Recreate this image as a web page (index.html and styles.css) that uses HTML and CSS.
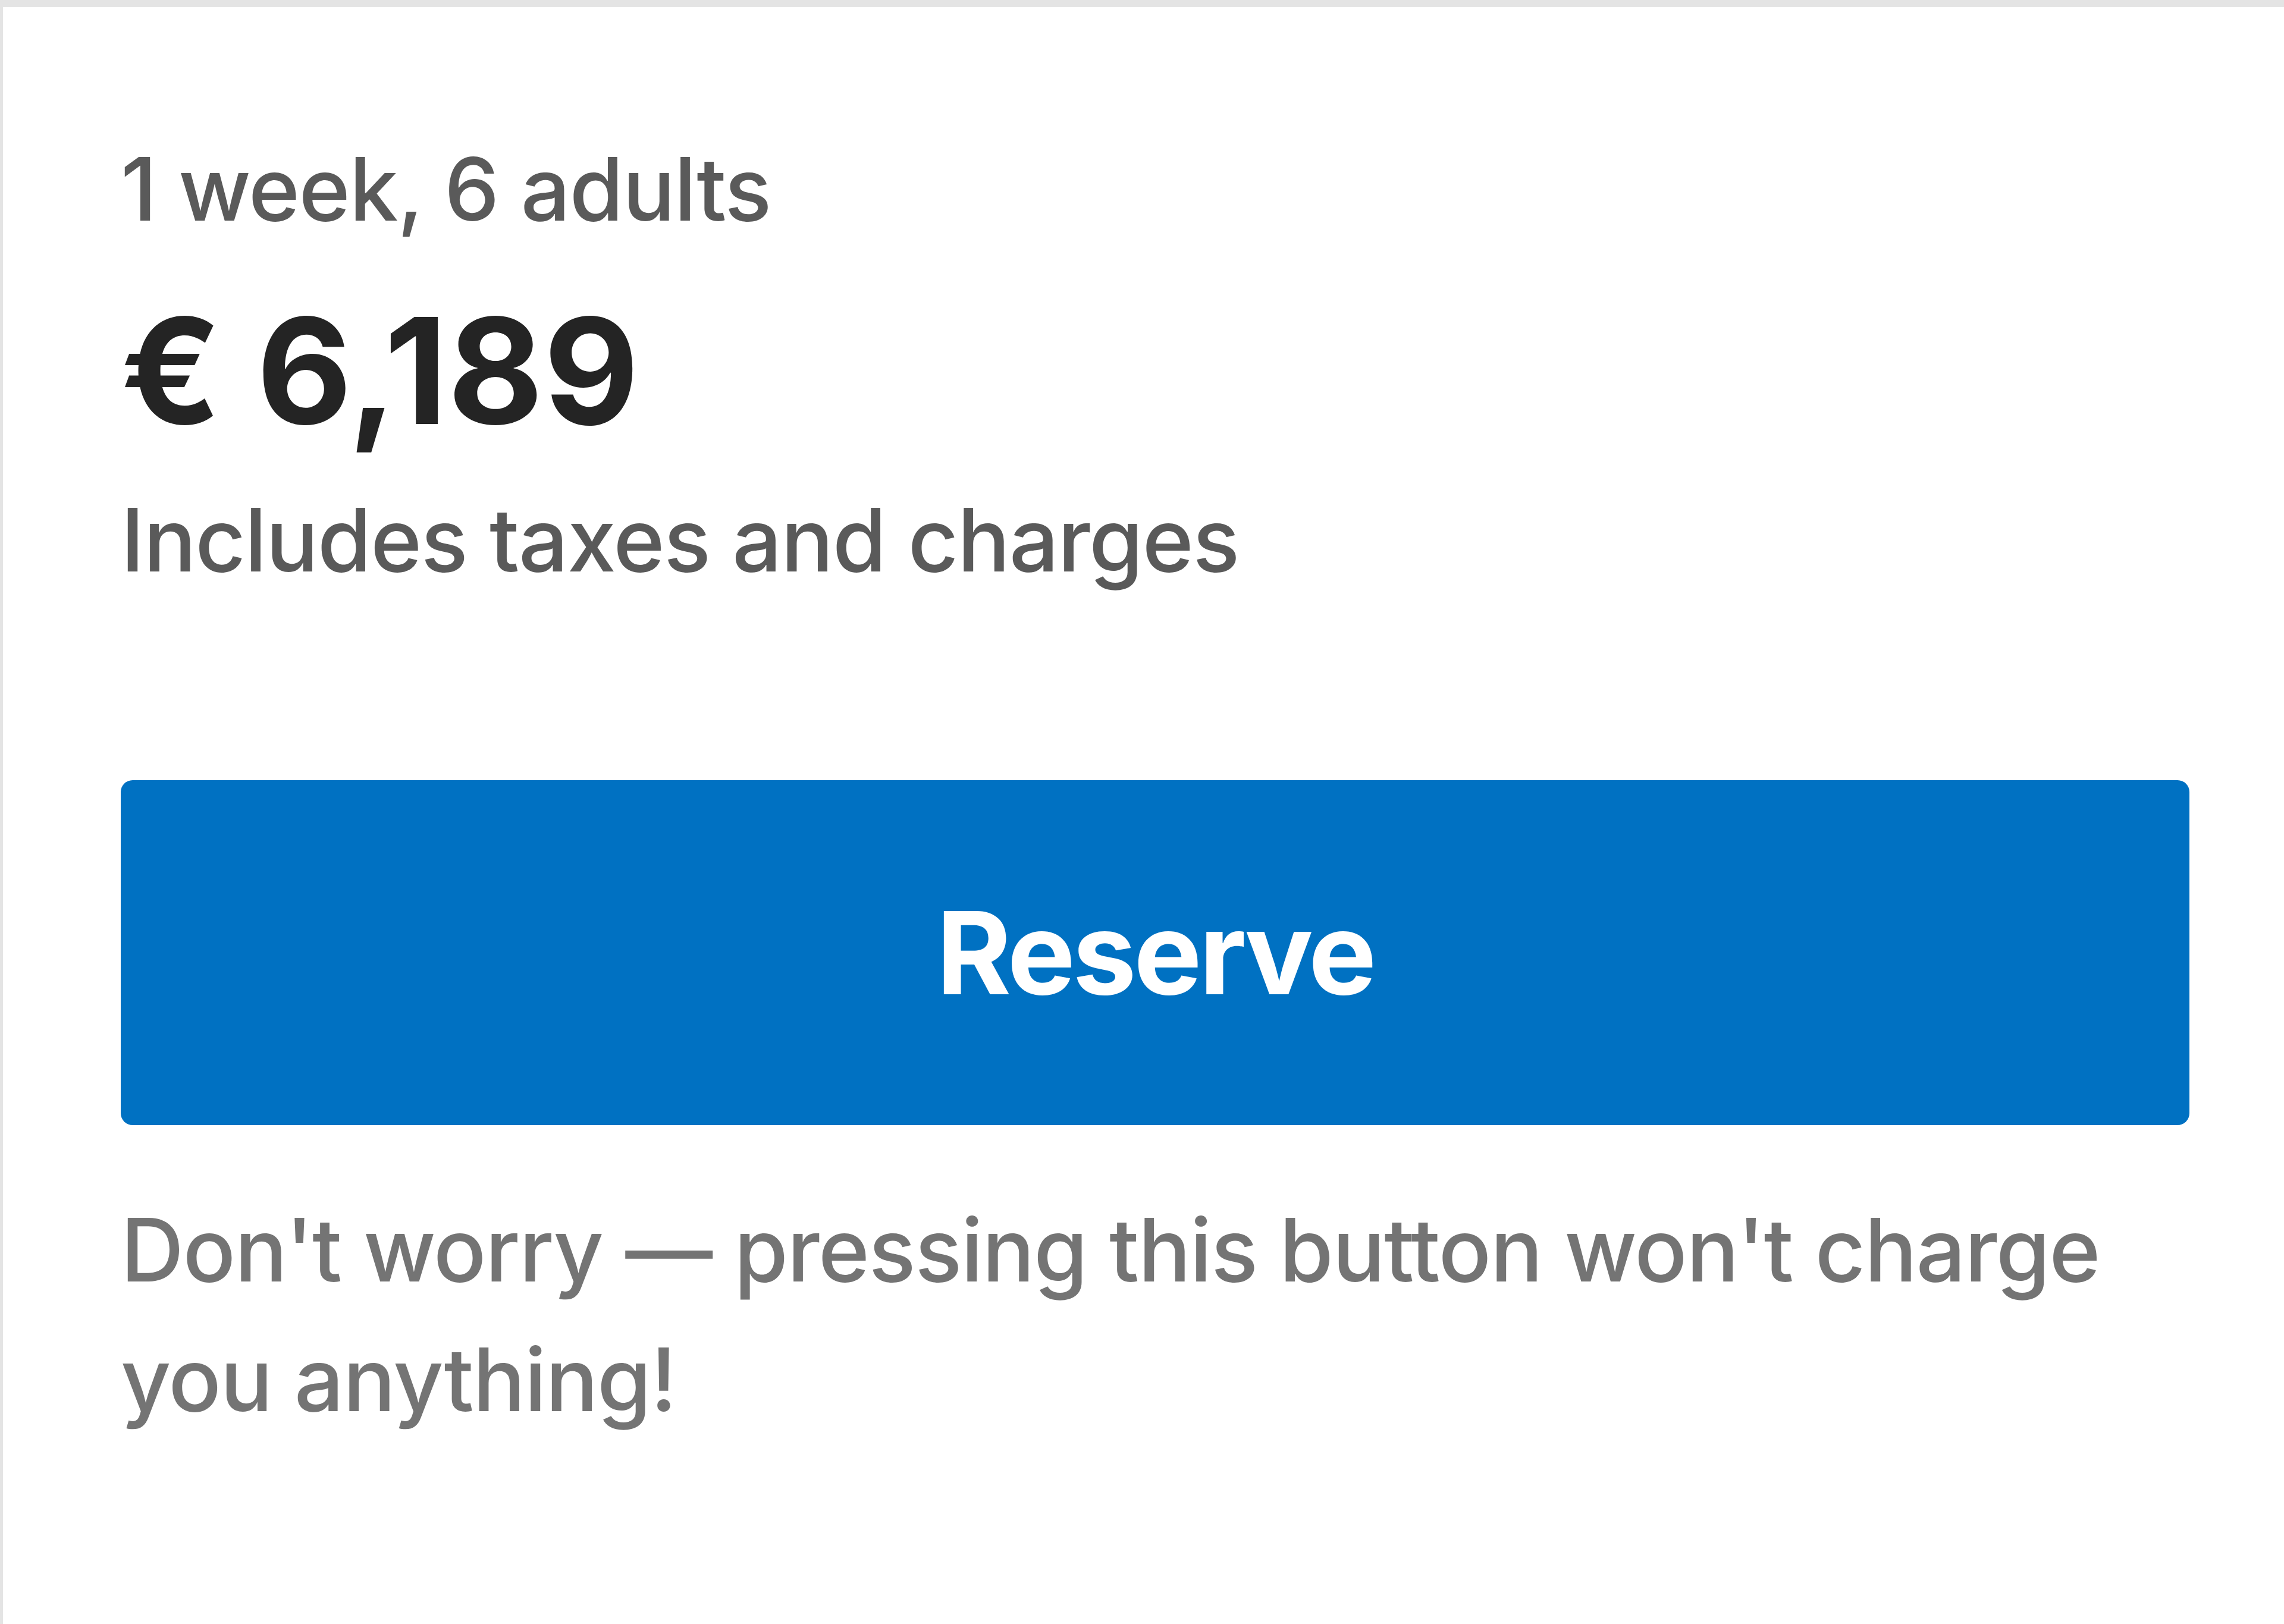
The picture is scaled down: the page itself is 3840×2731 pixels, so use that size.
FILE: index.html
```html
<!DOCTYPE html>
<html lang="en">
<head>
    <meta charset="UTF-8">
    <meta name="viewport" content="width=device-width, initial-scale=1.0">
    <title>Reserve</title>
    <link rel="stylesheet" href="styles.css">
</head>
<body>
    <div class="reserva">
        <p class="reserva-estancia">1 week, 6 adults</p>
        <p class="reserva-precio">€ 6,189</p>
        <p class="reserva-impuestos">Includes taxes and charges</p>

        <button type="button" class="reserva-boton">Reserve</button>

        <p class="reserva-aviso">Don't worry — pressing this button won't charge you anything!</p>
    </div>
</body>
</html>
```

FILE: styles.css
```css
html, body {
    margin: 0;
    padding: 0;
    height: 100%;
    overflow: hidden;
}

body {
    font-family: Inter, "Liberation Sans", sans-serif;
    background-color: #e4e4e4;
}

.reserva {
    box-sizing: border-box;
    width: 3874px;
    min-height: 2800px;
    margin: 12px 0 0 5px;
    padding: 196px 198px 0 198px;
    background-color: #fff;
}

.reserva p {
    margin: 0;
}

.reserva-estancia,
.reserva-impuestos,
.reserva-aviso {
    font-size: 147px;
    line-height: 220.5px;
    font-weight: 500;
    letter-spacing: -1.6px;
    color: #5a5a5a;
}

.reserva-precio {
    margin-top: 48px !important;
    font-size: 247px;
    line-height: 294px;
    font-weight: 700;
    letter-spacing: 0.5px;
    color: #242424;
}

.reserva-impuestos {
    margin-top: 27px !important;
}

.reserva-boton {
    display: flex;
    align-items: center;
    justify-content: center;
    width: 100%;
    height: 580px;
    margin-top: 294px;
    padding: 0;
    border: none;
    border-radius: 20px;
    background-color: #0071c2;
    color: #fff;
    font-family: inherit;
    font-size: 192px;
    line-height: 192px;
    font-weight: 700;
    letter-spacing: -4.5px;
    cursor: pointer;
}

.reserva-aviso {
    margin-top: 101px !important;
    line-height: 218px;
    color: #747474;
}
```
